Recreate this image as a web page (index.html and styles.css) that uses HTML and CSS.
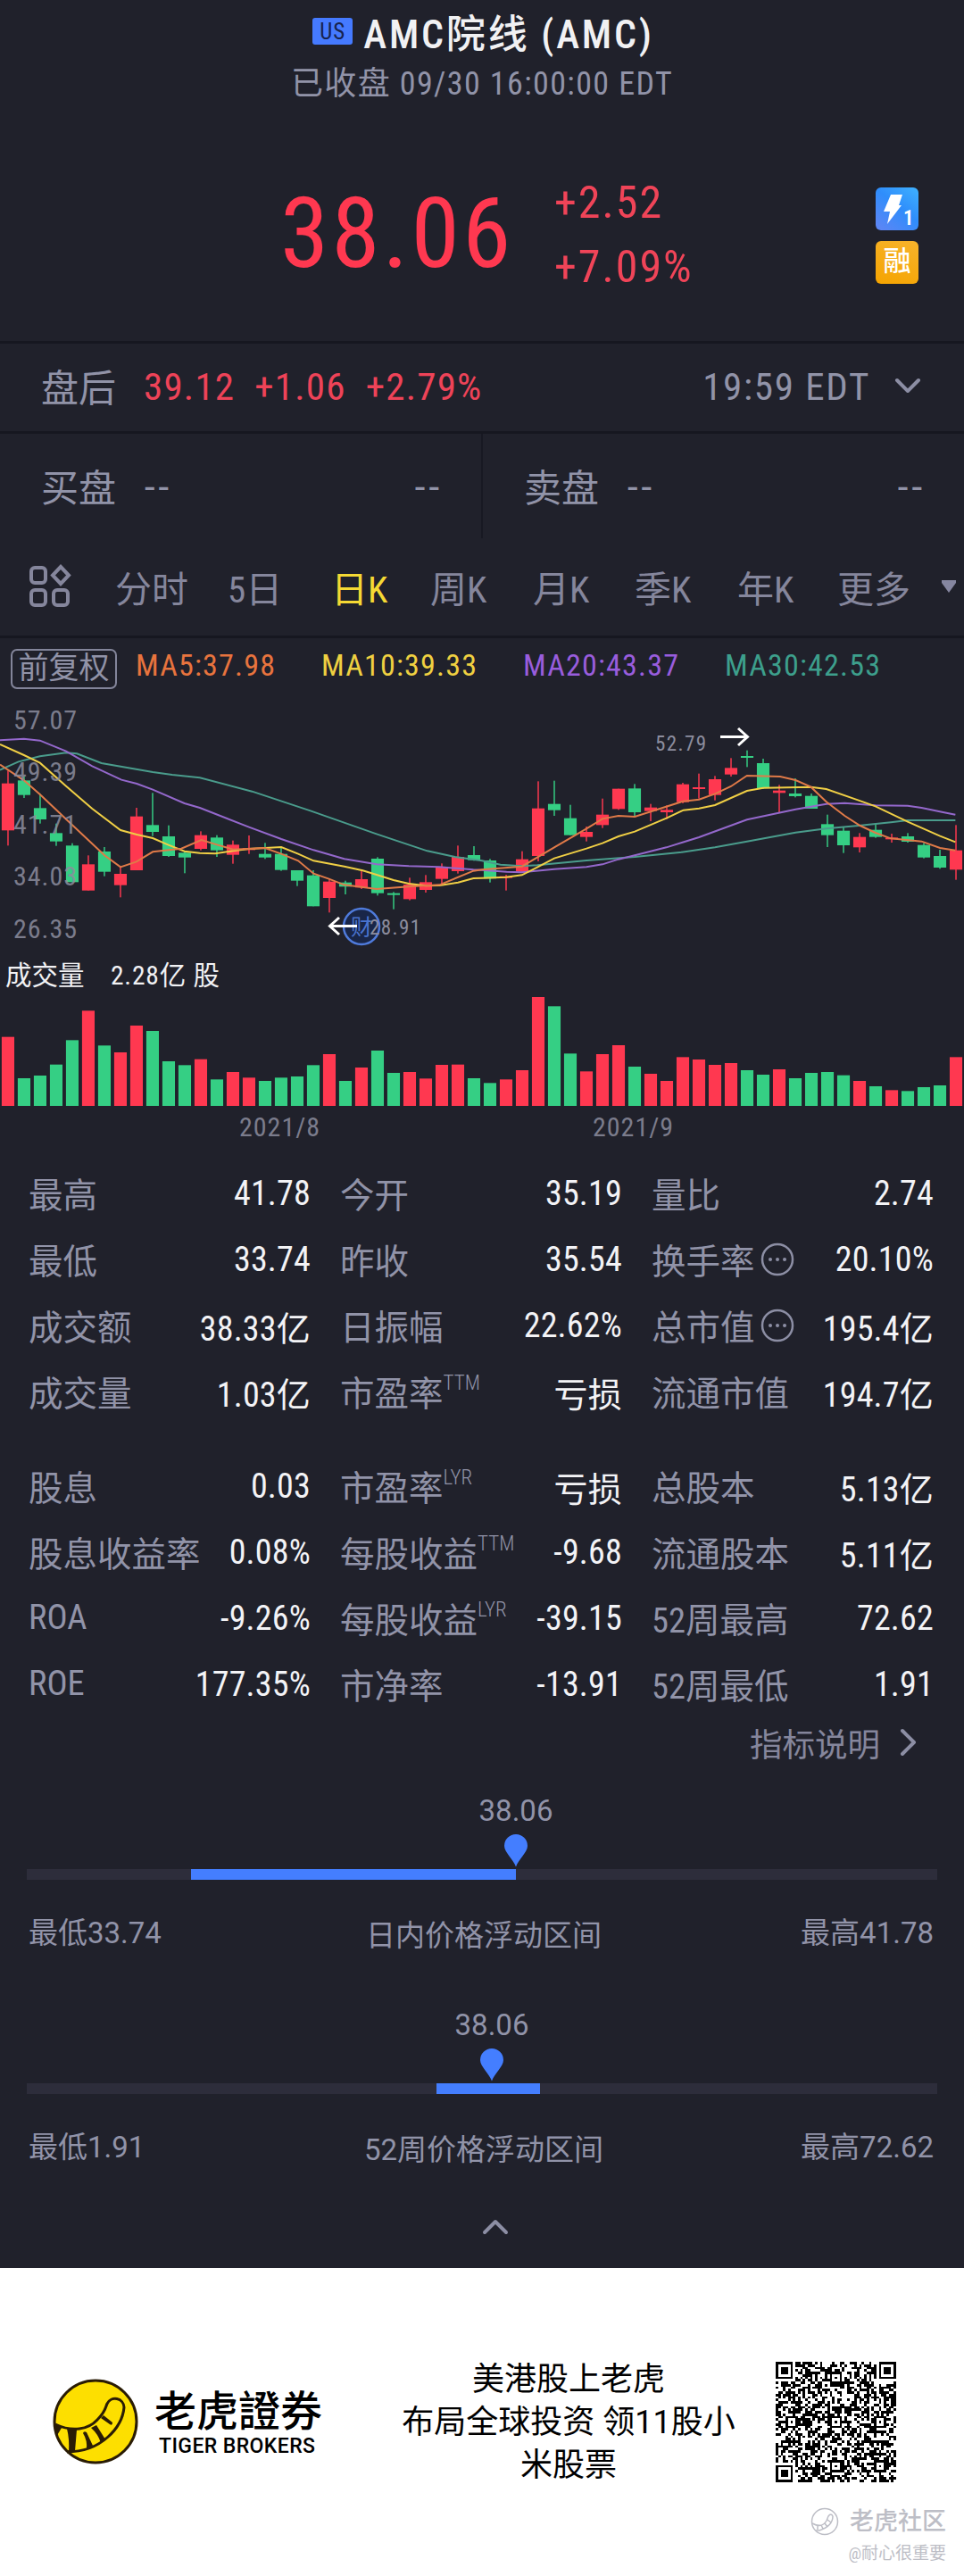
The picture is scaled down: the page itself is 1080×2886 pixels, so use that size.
FILE: index.html
```html
<!DOCTYPE html>
<html lang="zh-CN">

<head>
    <meta charset="UTF-8">
    <meta name="viewport" content="width=device-width, initial-scale=1.0">
    <title>AMC院线 (AMC)</title>
    <link rel="stylesheet" href="styles.css">
</head>

<body>
    <div class="quote">
        <header class="header">
            <div class="title"><span class="market">US</span><h1>AMC院线 (AMC)</h1></div>
            <p class="status">已收盘 09/30 16:00:00 EDT</p>
        </header>

        <div class="price">
            <div class="last">38.06</div>
            <div class="change">
                <span>+2.52</span>
                <span>+7.09%</span>
            </div>
            <div class="badges">
                <svg width="48" height="48" viewBox="0 0 48 48">
                    <defs>
                        <linearGradient id="blue" x1="1" y1="0" x2="0.2" y2="1">
                            <stop offset="0" stop-color="#3fb2ff" />
                            <stop offset="0.5" stop-color="#2f8dfb" />
                            <stop offset="1" stop-color="#5a86f5" />
                        </linearGradient>
                    </defs>
                    <rect width="48" height="48" rx="6" fill="url(#blue)" />
                    <path d="M17 8h13l-4 12h3L13 41l3-14H9z" fill="#fff" />
                    <text x="31" y="42" class="badge-num">1</text>
                </svg>
                <span class="margin-badge">融</span>
            </div>
        </div>

        <div class="after">
            <span class="after-label">盘后</span>
            <span class="up">39.12</span>
            <span class="up">+1.06</span>
            <span class="up">+2.79%</span>
            <span class="after-time">19:59 EDT</span>
            <svg width="30" height="20" viewBox="0 0 30 20"><path d="M3 3l12 12L27 3" class="chevron" /></svg>
        </div>

        <div class="book">
            <div class="side"><span>买盘</span><i>--</i><i class="qty">--</i></div>
            <div class="side"><span>卖盘</span><i>--</i><i class="qty">--</i></div>
        </div>

        <nav class="tabs">
            <svg width="50" height="50" viewBox="0 0 50 50" class="tab-icon">
                <rect x="5" y="4" width="16" height="17" rx="4" />
                <path d="M38 3l9 9.500-9 9.500-9-9.500z" />
                <rect x="5" y="29" width="16" height="17" rx="4" />
                <rect x="30" y="29" width="16" height="17" rx="4" />
            </svg>
            <span>分时</span>
            <span>5日</span>
            <span class="active">日K</span>
            <span>周K</span>
            <span>月K</span>
            <span>季K</span>
            <span>年K</span>
            <span>更多</span>
            <svg width="18" height="16" viewBox="0 0 18 16"><path d="M1 1h16v3L9 15 1 4z" fill="#8586a0" /></svg>
        </nav>

        <div class="ma">
            <span class="adjust">前复权</span>
            <span class="ma5">MA5:37.98</span>
            <span class="ma10">MA10:39.33</span>
            <span class="ma20">MA20:43.37</span>
            <span class="ma30">MA30:42.53</span>
        </div>

        <svg class="chart" width="1080" height="510" viewBox="0 0 1080 510">
            <svg width="1080" height="500" viewBox="0 0 3136 1500" preserveAspectRatio="none">
                <g id="candles"></g>
                <g id="volumes"></g>
                <g id="lines"></g>
            </svg>
            <g class="axis">
                <text x="15" y="36.500">57.07</text>
                <text x="15" y="95">49.39</text>
                <text x="15" y="154">41.71</text>
                <text x="15" y="212">34.03</text>
                <text x="15" y="271">26.35</text>
                <text x="268" y="493">2021/8</text>
                <text x="664" y="493">2021/9</text>
            </g>
            <text x="6" y="323" class="vol-label">成交量</text>
            <text x="124" y="323" class="vol-label vol-value">2.28亿 股</text>

            <circle cx="405" cy="258" r="20" class="event" />
            <text x="405" y="267" class="event-text">财</text>
            <path d="M400 257.500h-30M380 248l-10.500 9.500 10.500 9.500" class="arrow" />
            <text x="414" y="267" class="extreme">28.91</text>
            <text x="734" y="61" class="extreme">52.79</text>
            <path d="M807 45.500h29M827 36l10.500 9.500-10.500 9.500" class="arrow" />
        </svg>

        <div class="stats">
            <div><span>最高</span><b>41.78</b></div>
            <div><span>今开</span><b>35.19</b></div>
            <div><span>量比</span><b>2.74</b></div>
            <div><span>最低</span><b>33.74</b></div>
            <div><span>昨收</span><b>35.54</b></div>
            <div><span>换手率</span><svg class="info" width="38" height="38" viewBox="0 0 38 38"><circle cx="19" cy="19" r="17" /><path d="M11 19h.01M19 19h.01M27 19h.01" /></svg><b>20.10%</b></div>
            <div><span>成交额</span><b>38.33亿</b></div>
            <div><span>日振幅</span><b>22.62%</b></div>
            <div><span>总市值</span><svg class="info" width="38" height="38" viewBox="0 0 38 38"><circle cx="19" cy="19" r="17" /><path d="M11 19h.01M19 19h.01M27 19h.01" /></svg><b>195.4亿</b></div>
            <div><span>成交量</span><b>1.03亿</b></div>
            <div><span>市盈率</span><sup>TTM</sup><b>亏损</b></div>
            <div><span>流通市值</span><b>194.7亿</b></div>
        </div>

        <div class="stats">
            <div><span>股息</span><b>0.03</b></div>
            <div><span>市盈率</span><sup>LYR</sup><b>亏损</b></div>
            <div><span>总股本</span><b>5.13亿</b></div>
            <div><span>股息收益率</span><b>0.08%</b></div>
            <div><span>每股收益</span><sup>TTM</sup><b>-9.68</b></div>
            <div><span>流通股本</span><b>5.11亿</b></div>
            <div><span>ROA</span><b>-9.26%</b></div>
            <div><span>每股收益</span><sup>LYR</sup><b>-39.15</b></div>
            <div><span>52周最高</span><b>72.62</b></div>
            <div><span>ROE</span><b>177.35%</b></div>
            <div><span>市净率</span><b>-13.91</b></div>
            <div><span>52周最低</span><b>1.91</b></div>
        </div>

        <div class="explain">
            <span>指标说明</span>
            <svg width="20" height="32" viewBox="0 0 20 32"><path d="M3 3l13 13L3 29" class="chevron" /></svg>
        </div>

        <div class="range">
            <div class="marker" style="margin-left: 548px">
                <span>38.06</span>
                <svg width="28" height="37" viewBox="0 0 28 37"><path d="M14 36.500C11 28 1 20 1 13a13 13 0 0 1 26 0c0 7-10 15-13 23.500z" fill="#447eff" /></svg>
            </div>
            <div class="track"><div class="fill" style="margin-left: 184px; width: 364px"></div></div>
            <div class="range-labels"><span>最低33.74</span><span class="name">日内价格浮动区间</span><span>最高41.78</span></div>
        </div>

        <div class="range">
            <div class="marker" style="margin-left: 521px">
                <span>38.06</span>
                <svg width="28" height="37" viewBox="0 0 28 37"><path d="M14 36.500C11 28 1 20 1 13a13 13 0 0 1 26 0c0 7-10 15-13 23.500z" fill="#447eff" /></svg>
            </div>
            <div class="track"><div class="fill" style="margin-left: 459px; width: 116px"></div></div>
            <div class="range-labels"><span>最低1.91</span><span class="name">52周价格浮动区间</span><span>最高72.62</span></div>
        </div>

        <div class="collapse">
            <svg width="32" height="20" viewBox="0 0 32 20"><path d="M4 16L16 4l12 12" class="chevron" /></svg>
        </div>
    </div>

    <footer class="footer">
        <svg class="logo" width="96" height="98" viewBox="0 0 96 98">
            <circle cx="48" cy="49" r="46" fill="#fddf00" />
            <path d="M2 52L10 56 4 66z" fill="#2a1c05" />
            <path d="M16 57l11 1-2 24-7 1q1-14-2-26zM34 62q1-3 4-1l7 15-7 4q1-10-4-18zM43 56l6-3 10 16-5 4q-3-10-11-17zM54 45l3-3 10 8q0 4-3 2z" fill="#2a1c05" />
            <path d="M3 52C22 61 40 58 50 47C60 37 59 33 61 29A10 10 0 0 1 80 33C78 55 55 83 16 83" fill="none" stroke="#2a1c05" stroke-width="3" />
            <circle cx="48" cy="49" r="46" fill="none" stroke="#2a1c05" stroke-width="3" />
        </svg>
        <div class="brand">
            <strong>老虎證券</strong>
            <small>TIGER BROKERS</small>
        </div>
        <p class="slogan">美港股上老虎<br>布局全球投资 领11股小<br>米股票</p>
        <svg class="qr" width="135" height="135" viewBox="0 0 49 49" shape-rendering="crispEdges"><path id="qr" /></svg>
        <div class="watermark">
            <div class="community">
                <svg width="32" height="32" viewBox="0 0 32 32" fill="none" stroke="#bdbec6">
                    <circle cx="16" cy="16" r="14.500" stroke-width="1.500" />
                    <path d="M2 18q11 6 16-3l2-5q3-4 5 0 0 11-15 16l-4 0M8 20v5M12 20l2 4M16 18l3 4M19 14l4 3" stroke-width="1.500" />
                </svg>
                <span>老虎社区</span>
            </div>
            <span class="author">@耐心很重要</span>
        </div>
    </footer>

    <script>
        const NS = 'http://www.w3.org/2000/svg';
        const UP = '#ff3850';
        const DOWN = '#35cf84';

        // [up/down, high, body top, body bottom, low, volume top]
        const days = [
            ['r', 250, 293, 451, 502, 1145], ['g', 270, 283, 332, 342, 1284], ['g', 328, 376, 414, 428, 1275],
            ['g', 428, 460, 488, 503, 1238], ['g', 494, 502, 625, 625, 1156], ['r', 535, 565, 653, 653, 1057],
            ['g', 507, 522, 590, 605, 1174], ['r', 575, 597, 635, 676, 1197], ['r', 375, 404, 585, 585, 1107],
            ['g', 325, 433, 456, 470, 1125], ['g', 434, 471, 537, 540, 1227], ['g', 520, 526, 542, 595, 1240],
            ['r', 454, 467, 513, 518, 1220], ['g', 467, 475, 518, 540, 1288], ['r', 485, 499, 533, 563, 1263],
            ['r', 468, 511, 517, 530, 1282], ['g', 493, 530, 542, 547, 1293], ['g', 510, 530, 584, 587, 1282],
            ['g', 585, 585, 620, 638, 1278], ['g', 585, 602, 706, 706, 1240], ['r', 612, 623, 678, 727, 1203],
            ['g', 620, 626, 640, 666, 1293], ['r', 585, 615, 643, 648, 1248], ['g', 541, 546, 662, 670, 1191],
            ['g', 658, 662, 668, 716, 1266], ['r', 610, 633, 682, 686, 1263], ['r', 601, 625, 651, 660, 1285],
            ['r', 562, 576, 614, 630, 1239], ['r', 502, 540, 588, 596, 1238], ['g', 504, 534, 551, 553, 1284],
            ['g', 547, 552, 613, 626, 1300], ['r', 600, 605, 611, 653, 1288], ['r', 521, 548, 590, 592, 1257],
            ['r', 286, 377, 537, 555, 1011], ['g', 284, 362, 383, 402, 1042], ['g', 365, 410, 467, 467, 1201],
            ['r', 438, 456, 473, 488, 1261], ['r', 344, 398, 433, 443, 1203], ['r', 311, 311, 379, 382, 1173],
            ['g', 295, 310, 390, 402, 1245], ['r', 362, 374, 386, 420, 1269], ['r', 367, 382, 390, 413, 1293],
            ['r', 291, 296, 356, 360, 1213], ['r', 260, 306, 312, 344, 1221], ['r', 268, 279, 332, 350, 1239],
            ['r', 208, 241, 263, 270, 1233], ['g', 182, 201, 207, 238, 1257], ['g', 210, 225, 309, 312, 1272],
            ['r', 298, 317, 325, 390, 1254], ['g', 276, 327, 336, 340, 1284], ['g', 327, 335, 378, 378, 1266],
            ['g', 398, 430, 467, 507, 1263], ['g', 440, 452, 501, 527, 1274], ['r', 460, 473, 508, 525, 1293],
            ['g', 430, 449, 473, 476, 1311], ['r', 462, 475, 481, 492, 1324], ['g', 460, 471, 489, 492, 1327],
            ['g', 493, 500, 542, 545, 1314], ['g', 516, 537, 576, 580, 1308], ['r', 433, 518, 583, 617, 1213]
        ];

        const averages = {
            '#4a9c8c': '0,248 60,220 130,202 215,190 250,193 330,225 497,255 560,264 650,274 820,320 1010,385 1225,463 1390,520 1480,540 1568,553 1628,566 1698,571 1748,568 1908,552 2065,540 2218,524 2326,508 2430,488 2588,458 2688,445 2793,435 2898,424 2953,417 3108,417',
            '#9468cc': '0,148 78,143 130,149 215,185 300,235 395,281 445,294 497,314 600,360 650,375 810,440 915,480 1020,517 1120,547 1225,565 1330,571 1430,574 1540,583 1568,584 1648,590 1698,592 1803,581 1908,574 1960,565 2012,548 2065,535 2168,508 2218,492 2274,474 2430,415 2588,380 2688,362 2748,359 2848,367 2953,368 2998,375 3068,390 3108,398',
            '#f0cf45': '0,162 78,198 130,224 215,302 300,378 392,450 445,465 497,477 548,500 600,521 650,527 700,529 758,520 810,513 915,507 970,530 1020,553 1120,572 1180,586 1225,600 1280,618 1330,630 1385,637 1430,636 1490,626 1540,612 1568,611 1646,608 1698,601 1748,575 1803,545 1908,512 1960,494 2012,471 2065,455 2168,410 2223,383 2274,377 2326,366 2430,318 2483,308 2638,305 2688,312 2793,350 2848,370 2953,422 3058,470 3108,490',
            '#e07a48': '0,230 78,283 130,330 235,433 340,535 392,574 444,556 497,523 590,512 655,483 706,499 758,515 862,510 915,530 970,553 1020,596 1070,614 1120,634 1225,648 1330,640 1430,634 1540,587 1568,583 1698,572 1803,508 1908,445 1960,412 2012,402 2065,405 2223,353 2274,347 2326,328 2378,303 2430,267 2538,270 2588,282 2638,305 2688,355 2748,402 2798,435 2848,459 2898,478 2998,488 3058,510 3108,518'
        };

        function add(parent, tag, attrs) {
            const el = document.createElementNS(NS, tag);
            for (const key in attrs) el.setAttribute(key, attrs[key]);
            document.getElementById(parent).appendChild(el);
        }

        days.forEach(([dir, high, top, bottom, low, vol], i) => {
            const x = 26 + i * 52.27;
            const color = dir === 'r' ? UP : DOWN;
            add('candles', 'rect', { x: x - 2.5, y: high, width: 5, height: low - high, fill: color, opacity: 0.85 });
            add('candles', 'rect', { x: x - 20.5, y: top, width: 41, height: bottom - top, fill: color });
            add('volumes', 'rect', { x: x - 20.5, y: vol, width: 41, height: 1377 - vol, fill: color });
        });

        for (const color in averages) {
            add('lines', 'polyline', { points: averages[color], stroke: color });
        }

        // QR code
        const size = 49;
        let seed = 20210930;
        let d = '';

        function random() {
            seed = (seed * 1103515245 + 12345) % 2147483648;
            return seed / 2147483648;
        }

        function ring(x, y, cx, cy) {
            return Math.max(Math.abs(x - cx), Math.abs(y - cy));
        }

        for (let y = 0; y < size; y++) {
            for (let x = 0; x < size; x++) {
                let on = random() < 0.5;
                if (x === 6 || y === 6) on = (x + y) % 2 === 0;
                for (const [cx, cy] of [[24, 6], [6, 24], [24, 24], [42, 24], [24, 42], [42, 42]]) {
                    const r = ring(x, y, cx, cy);
                    if (r <= 2) on = r !== 1;
                }
                for (const [cx, cy] of [[3, 3], [45, 3], [3, 45]]) {
                    const r = ring(x, y, cx, cy);
                    if (r <= 4) on = r !== 2 && r !== 4;
                }
                if (on) d += `M${x} ${y}h1v1h-1z`;
            }
        }
        document.getElementById('qr').setAttribute('d', d);
    </script>
</body>

</html>
```
FILE: styles.css
```css
* {
    box-sizing: border-box;
}

body {
    margin: 0;
    width: 1080px;
    background: #fff;
    font-family: Roboto, "Noto Sans CJK SC", sans-serif;
    font-stretch: 75%;
    color: #9193a8;
}

h1, p {
    margin: 0;
    font-weight: 400;
}

.quote {
    height: 2541px;
    background: #20212b;
    overflow: hidden;
}

.header {
    height: 150px;
    padding-top: 12px;
}

.title {
    display: flex;
    justify-content: center;
    gap: 12px;
    height: 60px;
}

.title h1 {
    font-size: 44px;
    line-height: 54px;
    font-weight: 500;
    letter-spacing: 2.8px;
    margin-right: -3px;
    color: #f1f1f3;
}

.market {
    margin-top: 8px;
    width: 45px;
    height: 30px;
    border-radius: 3px;
    background: #457aff;
    color: #17234d;
    font-size: 25px;
    line-height: 31px;
    letter-spacing: 1px;
    text-align: center;
}

.status {
    font-size: 36px;
    line-height: 45px;
    letter-spacing: 1.4px;
    text-align: center;
}

.price {
    display: flex;
    height: 235px;
    padding-left: 314px;
    padding-right: 51px;
    border-bottom: 3px solid #161720;
}

.last {
    width: 307px;
    padding-top: 46px;
    font-size: 110px;
    line-height: 132px;
    font-weight: 450;
    letter-spacing: 3px;
    color: #ff3850;
}

.change {
    flex: 1;
    display: flex;
    flex-direction: column;
    padding-top: 41px;
    font-size: 50px;
    line-height: 72px;
    letter-spacing: 2px;
    color: #f04458;
}

.badges {
    display: flex;
    flex-direction: column;
    gap: 12px;
    padding-top: 60px;
}

.badge-num {
    font-size: 23px;
    font-weight: 600;
    fill: #fff;
}

.margin-badge {
    width: 48px;
    height: 48px;
    border-radius: 6px;
    background: linear-gradient(20deg, #f5a400, #f7b32c);
    color: #fff;
    font-size: 31px;
    font-weight: 500;
    line-height: 46px;
    text-align: center;
}

.after {
    display: flex;
    align-items: center;
    height: 101px;
    padding: 0 48px 2px 46px;
    border-bottom: 3px solid #161720;
    font-size: 43px;
}

.after-label {
    margin-right: 31px;
    padding-bottom: 3px;
    font-size: 42px;
}

.up {
    margin-right: 22px;
    letter-spacing: 1.2px;
    color: #ee4358;
}

.after-time {
    margin-left: auto;
    margin-right: 27px;
    letter-spacing: 1.7px;
}

.chevron {
    fill: none;
    stroke: #8c8ea4;
    stroke-width: 4;
    stroke-linecap: round;
    stroke-linejoin: round;
}

.book {
    display: flex;
    height: 117px;
}

.side {
    flex: 1;
    display: flex;
    align-items: center;
    padding: 0 47px 2px 46px;
    font-size: 42px;
}

.side + .side {
    border-left: 2px solid #181922;
}

.side i {
    margin-left: 32px;
    padding-top: 3px;
    font-style: normal;
    font-stretch: 100%;
    letter-spacing: 4px;
}

.side .qty {
    margin-left: auto;
    margin-right: -4px;
}

.tabs {
    display: grid;
    grid-template-columns: 99px 126px 116px 111px 115px 114px 115px 112px 116px 20px;
    align-items: center;
    height: 112px;
    padding: 0 0 2px 30px;
    border-bottom: 3px solid #161720;
    font-size: 41px;
    color: #85869c;
}

.tab-icon {
    fill: none;
    stroke: #85869c;
    stroke-width: 4;
}

.tabs .active {
    color: #f5d934;
}

.ma {
    display: grid;
    grid-template-columns: 140px 208px 226px 226px 226px;
    height: 65px;
    padding-left: 12px;
    padding-top: 12px;
    font-size: 34px;
    line-height: 36px;
    letter-spacing: 1.2px;
}

.adjust {
    width: 119px;
    height: 45px;
    border: 2px solid #83859a;
    border-radius: 7px;
    font-size: 34px;
    line-height: 39px;
    letter-spacing: 0;
    text-align: center;
}

.ma5 { color: #e8743e; }
.ma10 { color: #efd041; }
.ma20 { color: #995ddd; }
.ma30 { color: #3d9f8c; }

.chart {
    display: block;
}

.axis text {
    font-size: 30px;
    letter-spacing: 1px;
    fill: #8c8d9e;
    opacity: 0.85;
}

.vol-label {
    font-size: 29.5px;
    fill: #f1f1f4;
}

.vol-value {
    letter-spacing: 0.8px;
}

#lines polyline {
    fill: none;
    stroke-width: 2;
    vector-effect: non-scaling-stroke;
}

.event {
    fill: #152a5c;
    fill-opacity: 0.6;
    stroke: #4f7bdc;
    stroke-width: 2.5;
}

.event-text {
    font-size: 24px;
    text-anchor: middle;
    fill: #4a74cf;
}

.arrow {
    fill: none;
    stroke: #fff;
    stroke-width: 3;
}

.extreme {
    font-size: 23px;
    letter-spacing: 1.4px;
    fill: #8c8d9e;
}

.stats {
    display: grid;
    grid-template-columns: repeat(3, 316px);
    column-gap: 33px;
    grid-auto-rows: 74px;
    padding: 10px 32px 22px;
    font-size: 38.5px;
}

.stats div {
    display: flex;
    align-items: center;
    white-space: nowrap;
}

.stats span {
    padding-bottom: 3px;
    font-stretch: 85%;
}

.stats b {
    margin-left: auto;
    font-size: 38px;
    font-weight: 400;
    letter-spacing: 0.2px;
    color: #f3f3f6;
}

.stats sup {
    align-self: flex-start;
    padding-top: 13px;
    font-size: 23px;
    font-weight: 350;
    line-height: 30px;
}

.info {
    margin-left: 6px;
    fill: none;
    stroke: #8c8ea4;
    stroke-width: 2.5;
}

.info path {
    stroke-width: 4;
    stroke-linecap: round;
}

.explain {
    display: flex;
    justify-content: flex-end;
    align-items: center;
    gap: 22px;
    height: 60px;
    margin-top: -24px;
    padding-right: 52px;
    font-size: 36.5px;
    color: #85869c;
}

.range {
    height: 240px;
    padding: 0 30px;
    font-size: 33px;
    font-stretch: 100%;
}

.explain + .range {
    margin-top: 26px;
}

.marker {
    display: flex;
    flex-direction: column;
    align-items: center;
    width: 0;
    height: 86px;
}

.marker span {
    height: 47px;
    line-height: 42px;
}

.marker svg {
    flex: none;
}

.track {
    height: 12px;
    background: #2d2d3b;
}

.fill {
    height: 12px;
    background: #447eff;
}

.range-labels {
    display: grid;
    grid-template-columns: 1fr auto 1fr;
    padding: 36px 4px 0 2px;
    line-height: 48px;
}

.range-labels span:last-child {
    text-align: right;
}

.range-labels .name {
    padding: 3px 0 0 6px;
    font-size: 33px;
}

.collapse {
    display: flex;
    justify-content: center;
    padding-left: 30px;
    margin-top: -3px;
}

.footer {
    display: flex;
    position: relative;
    height: 345px;
    padding-left: 59px;
    color: #000;
}

.logo {
    margin-top: 123px;
}

.brand {
    display: flex;
    flex-direction: column;
    width: 190px;
    margin-left: 18px;
    padding-top: 126px;
}

.brand strong {
    font-family: "Noto Sans CJK TC", sans-serif;
    font-size: 47px;
    line-height: 62px;
    font-weight: 500;
    white-space: nowrap;
}

.brand small {
    padding-left: 5px;
    font-size: 23px;
    line-height: 24px;
    font-weight: 500;
    font-stretch: 100%;
    letter-spacing: 0.4px;
    white-space: nowrap;
}

.slogan {
    width: 400px;
    margin-left: 74px;
    padding-top: 101px;
    font-size: 36px;
    line-height: 48px;
    text-align: center;
    font-stretch: 100%;
}

.qr {
    margin-left: 32px;
    margin-top: 105px;
}

/* community mark over the bottom right corner */
.watermark {
    position: absolute;
    right: 20px;
    bottom: 8px;
    display: flex;
    flex-direction: column;
    align-items: flex-end;
    color: #bdbec6;
}

.community {
    display: flex;
    align-items: center;
    gap: 12px;
    font-size: 27px;
    line-height: 38px;
    font-weight: 500;
}

.author {
    font-size: 19px;
    line-height: 34px;
    white-space: nowrap;
}
```
